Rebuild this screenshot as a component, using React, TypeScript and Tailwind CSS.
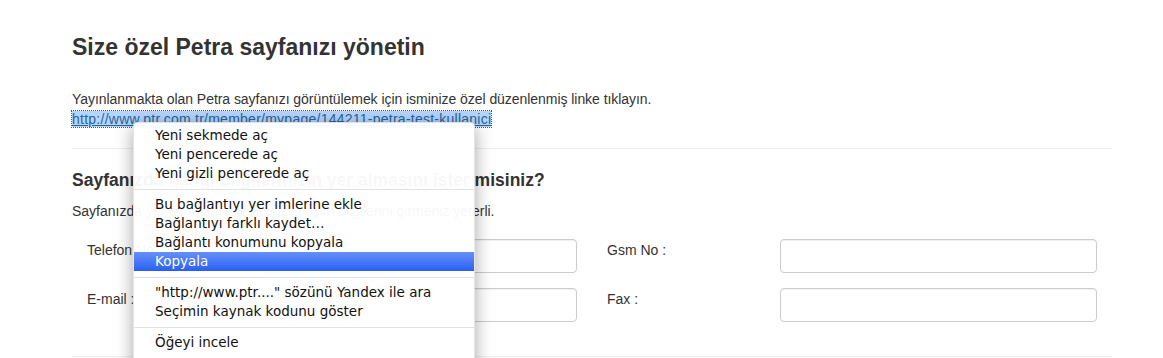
import React from "react";

const Item = ({ children, active }: { children: React.ReactNode; active?: boolean }) => (
  <div
    className={
      "h-[19px] whitespace-nowrap pl-[21px] leading-[19px] " +
      (active ? "bg-gradient-to-b from-[#6690f8] to-[#2a5ef4] text-white" : "text-[#111]")
    }
  >
    {children}
  </div>
);

const Sep = () => (
  <div className="flex h-[12px] items-center">
    <div className="h-px w-full bg-[#e2e2e2]" />
  </div>
);

const Field = ({ label }: { label: string }) => (
  <div className="grid grid-cols-[1fr_2fr]">
    <div className="px-[15px] pt-px text-[14px] leading-[20px] text-[#333]">{label}</div>
    <div className="px-[15px]">
      <div className="h-[34px] rounded-[4px] border border-[#cccccc] bg-white shadow-[inset_0_1px_1px_rgba(0,0,0,0.06)]" />
    </div>
  </div>
);

export default function App() {
  return (
    <div className="relative h-[358px] w-[1163px] overflow-hidden bg-white font-['Liberation_Sans',Arial,sans-serif] text-[#333]">
      <div className="ml-[72px] w-[1040px] pt-[34px]">
        <h1 className="text-[23px] font-bold leading-[26px] text-[#333]">Size özel Petra sayfanızı yönetin</h1>
        <p className="mt-[29px] text-[14px] leading-[20px] tracking-[-0.05px]">
          Yayınlanmakta olan Petra sayfanızı görüntülemek için isminize özel düzenlenmiş linke tıklayın.
          <br />
          <a className="bg-[#b4d5fe] tracking-[0.25px] text-[#2a6496] underline outline-1 outline-dotted outline-[#555]">
            http://www.ptr.com.tr/member/mypage/144211-petra-test-kullanici
          </a>
        </p>
        <div className="mt-[19px] h-px bg-[#eeeeee]" />
        <h3 className="mt-[21px] text-[17.5px] font-bold leading-[20px]">
          Sayfanızda hangi bilgilerinizin yer almasını ister misiniz?
        </h3>
        <p className="mt-[11px] text-[14px] leading-[20px]">
          Sayfanızda yer almasını istediğiniz iletişim bilgilerini girmeniz yeterli.
        </p>
        <div className="mt-[18px] grid grid-cols-2">
          <div className="flex flex-col gap-[15px]">
            <Field label="Telefon No :" />
            <Field label="E-mail :" />
          </div>
          <div className="flex flex-col gap-[15px]">
            <Field label="Gsm No :" />
            <Field label="Fax :" />
          </div>
        </div>
        <div className="mt-[34px] h-px bg-[#eeeeee]" />
      </div>

      <div className="absolute left-[133px] top-[122px] w-[342px] rounded-t-[5px] border border-black/10 bg-white/[0.96] pb-[20px] pt-[3px] font-['DejaVu_Sans',sans-serif] text-[13.5px] shadow-[0_4px_18px_rgba(0,0,0,0.35)]">
        <Item>Yeni sekmede aç</Item>
        <Item>Yeni pencerede aç</Item>
        <Item>Yeni gizli pencerede aç</Item>
        <Sep />
        <Item>Bu bağlantıyı yer imlerine ekle</Item>
        <Item>Bağlantıyı farklı kaydet…</Item>
        <Item>Bağlantı konumunu kopyala</Item>
        <Item active>Kopyala</Item>
        <Sep />
        <Item>"http://www.ptr...." sözünü Yandex ile ara</Item>
        <Item>Seçimin kaynak kodunu göster</Item>
        <Sep />
        <Item>Öğeyi incele</Item>
      </div>
    </div>
  );
}
